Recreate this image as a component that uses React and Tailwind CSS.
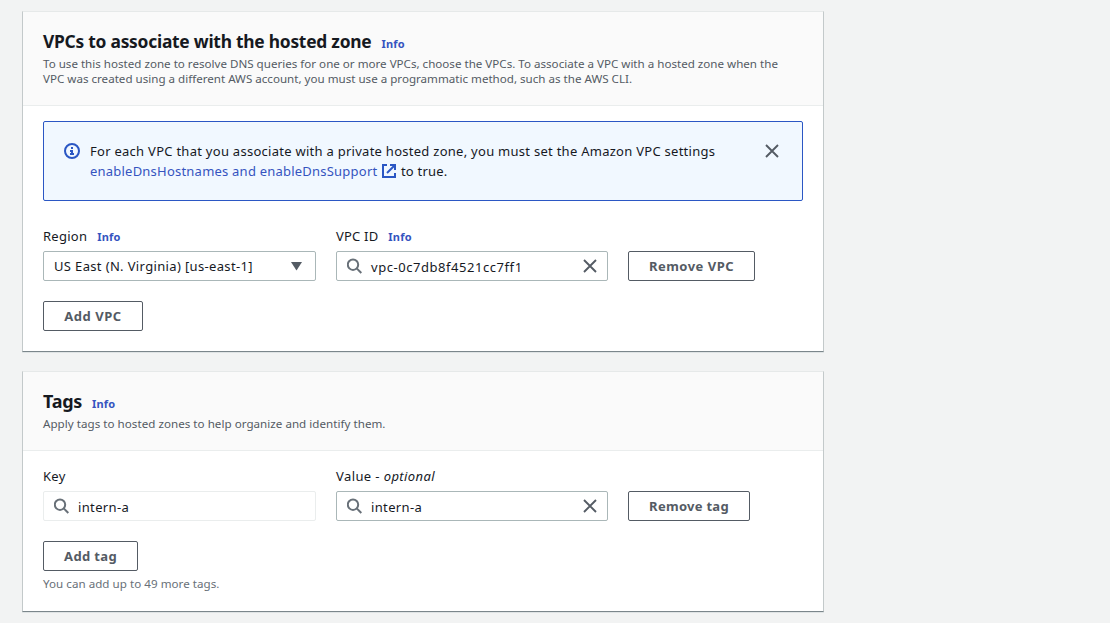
import React from "react";

function InfoLink({ className = "" }) {
  return (
    <a className={`text-[11px] font-bold leading-[16px] tracking-[0.2px] text-[#3554c0] ${className}`}>Info</a>
  );
}

function SearchIcon() {
  return (
    <svg viewBox="0 0 16 16" className="h-4 w-4 shrink-0" fill="none" stroke="#687078" strokeWidth="2">
      <circle cx="6" cy="6.7" r="5.2" />
      <path d="M9.7 10.4l4.6 4.6" />
    </svg>
  );
}

function CloseIcon() {
  return (
    <svg viewBox="0 0 16 16" className="h-4 w-4 shrink-0" fill="none" stroke="#545b64" strokeWidth="1.9">
      <path d="M2 2l12 12M14 2L2 14" />
    </svg>
  );
}

function StatusInfoIcon() {
  return (
    <svg viewBox="0 0 16 16" className="h-4 w-4 shrink-0" fill="none" stroke="#2b57c4" strokeWidth="2">
      <circle cx="8" cy="8" r="7" />
      <path d="M8 11V8H6M10 11H6" />
      <path d="M8 6V4" />
    </svg>
  );
}

function ExternalIcon() {
  return (
    <svg viewBox="0 0 16 16" className="h-4 w-4 shrink-0" fill="none" stroke="#2b57c4" strokeWidth="2">
      <path d="M14 10v4H2V2h4" />
      <path d="M9 2h5v5" />
      <path d="M6 10l8-8" />
    </svg>
  );
}

function Button({ children, className }) {
  return (
    <button
      className={`flex h-[30px] items-center justify-center whitespace-nowrap rounded-[2px] border border-[#545b64] bg-white text-[13px] font-bold leading-5 text-[#545b64] ${className}`}
    >
      {children}
    </button>
  );
}

function SearchField({ value, valueClass = "", clearable, className }) {
  return (
    <div className={`flex h-[30px] items-center rounded-[2px] border bg-white pl-2.5 pr-[9px] ${className}`}>
      <SearchIcon />
      <span className={`ml-2 flex-1 pt-px text-[13px] leading-5 ${valueClass}`}>{value}</span>
      {clearable && <CloseIcon />}
    </div>
  );
}

function Card({ title, titleClass, description, descriptionClass = "", headerClass, className, children }) {
  return (
    <section
      className={`w-[802px] border border-b-[#7b868b] border-l-[#c3c9ca] border-r-[#c3c9ca] border-t-[#e6e9e9] bg-white shadow-[0_1px_0_#dfe3e4] ${className}`}
    >
      <header className={`border-b border-[#eaeded] bg-[#fafafa] px-5 pt-[18px] ${headerClass}`}>
        <div className="flex items-baseline gap-2.5">
          <h2 className={`leading-[22px] font-bold text-[#16191f] ${titleClass}`}>{title}</h2>
          <InfoLink />
        </div>
        <p className={`mt-1 whitespace-nowrap text-[11.6px] leading-[15px] text-[#545b64] ${descriptionClass}`}>
          {description}
        </p>
      </header>
      <div className="px-5">{children}</div>
    </section>
  );
}

export default function App() {
  return (
    <main className="flex h-[623px] w-full flex-col gap-[19px] overflow-hidden bg-[#f2f3f3] pl-[22px] pt-[11px] font-['Noto_Sans',sans-serif] text-[13px] leading-5 text-[#16191f]">
      <Card
        title="VPCs to associate with the hosted zone"
        titleClass="text-[17.4px] tracking-[-0.25px]"
        headerClass="h-[94px]"
        className="h-[341px]"
        description={
          <>
            To use this hosted zone to resolve DNS queries for one or more VPCs, choose the VPCs. To associate a VPC with a hosted zone when the
            <br />
            VPC was created using a different AWS account, you must use a programmatic method, such as the AWS CLI.
          </>
        }
      >
        <div className="mt-[15px] flex h-20 items-start rounded-[2px] border border-[#2b57c4] bg-[#f1f8ff] pl-5 pr-[22px] pt-[21px]">
          <StatusInfoIcon />
          <div className="-mt-0.5 ml-2.5 flex-1">
            <p className="whitespace-nowrap tracking-[0.27px]">
              For each VPC that you associate with a private hosted zone, you must set the Amazon VPC settings
            </p>
            <p className="flex items-center whitespace-nowrap tracking-[0.22px]">
              <a className="mr-1 text-[#3554c0]">enableDnsHostnames and enableDnsSupport</a>
              <ExternalIcon />
              <span className="ml-[3.5px]">to true.</span>
            </p>
          </div>
          <CloseIcon />
        </div>

        <div className="mt-[25px] grid grid-cols-[273px_272px_auto] items-end justify-start gap-x-5">
          <div>
            <div className="mb-[5px] flex items-baseline gap-2.5">
              <label className="tracking-[0.25px]">Region</label>
              <InfoLink />
            </div>
            <div className="flex h-[30px] items-center justify-between rounded-[2px] border border-[#aab7b8] pl-2.5 pr-[13px]">
              <span className="tracking-[0.35px]">US East (N. Virginia) [us-east-1]</span>
              <svg viewBox="0 0 11 9" className="h-[9px] w-[11px]" fill="#545b64">
                <path d="M0 0h11L5.5 8.5z" />
              </svg>
            </div>
          </div>
          <div>
            <div className="mb-[5px] flex items-baseline gap-2.5">
              <label className="tracking-[0.2px]">VPC ID</label>
              <InfoLink />
            </div>
            <SearchField value="vpc-0c7db8f4521cc7ff1" valueClass="tracking-[0.55px]" clearable className="border-[#aab7b8]" />
          </div>
          <Button className="w-[127px] tracking-[0.48px]">Remove VPC</Button>
        </div>
        <Button className="mt-5 w-[100px] tracking-[0.55px]">Add VPC</Button>
      </Card>

      <Card
        title="Tags"
        titleClass="text-[18px] tracking-[-0.3px]"
        headerClass="h-[79px]"
        className="h-[241px]"
        descriptionClass="tracking-[0.03px]"
        description="Apply tags to hosted zones to help organize and identify them."
      >
        <div className="mt-[15px] grid grid-cols-[273px_272px_auto] items-end justify-start gap-x-5">
          <div>
            <label className="mb-[5px] block tracking-[0.3px]">Key</label>
            <SearchField value="intern-a" valueClass="tracking-[0.35px]" className="border-[#eaeded]" />
          </div>
          <div>
            <label className="mb-[5px] block tracking-[0.4px]">
              Value - <em>optional</em>
            </label>
            <SearchField value="intern-a" valueClass="tracking-[0.35px]" clearable className="border-[#aab7b8]" />
          </div>
          <Button className="w-[122px] tracking-[0.28px]">Remove tag</Button>
        </div>
        <Button className="mt-5 w-[95px] tracking-[0.35px]">Add tag</Button>
        <p className="mt-[5px] text-[11.6px] leading-[15px] tracking-[0.03px] text-[#687078]">
          You can add up to 49 more tags.
        </p>
      </Card>
    </main>
  );
}
